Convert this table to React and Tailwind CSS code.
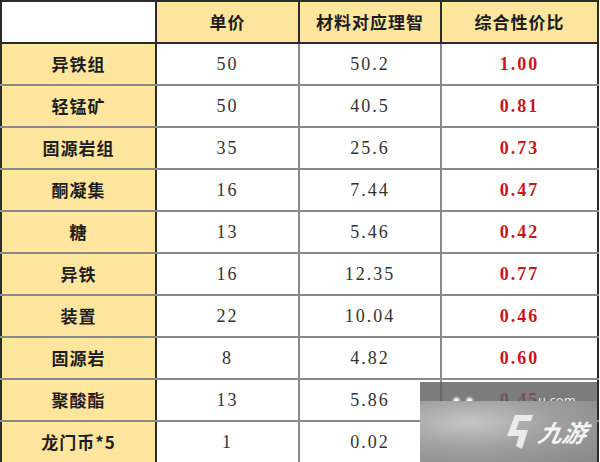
const ROWS = [
  ["异铁组", "50", "50.2", "1.00"],
  ["轻锰矿", "50", "40.5", "0.81"],
  ["固源岩组", "35", "25.6", "0.73"],
  ["酮凝集", "16", "7.44", "0.47"],
  ["糖", "13", "5.46", "0.42"],
  ["异铁", "16", "12.35", "0.77"],
  ["装置", "22", "10.04", "0.46"],
  ["固源岩", "8", "4.82", "0.60"],
  ["聚酸酯", "13", "5.86", "0.45"],
  ["龙门币*5", "1", "0.02", ""],
];

const cjk = "font-['Noto_Sans_CJK_SC',sans-serif]";
const num = "font-['Liberation_Serif','Noto_Sans_CJK_SC',serif] tracking-[2px]";

function Watermark() {
  return (
    <div className="absolute left-[420px] top-[382px] w-[177px] h-[80px] overflow-hidden">
      <div className="h-[19px] bg-[rgba(95,95,95,0.82)] flex items-end gap-2 pl-8 overflow-hidden">
        <span className="text-white text-[15px] leading-none translate-y-[6px] blur-[1px] font-bold">● ●</span>
        <span className="text-[#e9e9e9] text-[13px] leading-none translate-y-[6px] blur-[0.6px] ml-14">u.com</span>
      </div>
      <div className="h-[61px] bg-[radial-gradient(ellipse_at_28%_35%,#c6c6c6_0%,#a0a0a0_45%,#878787_100%)] flex items-center pl-[86px] gap-[5px]">
        <svg width="28" height="38" viewBox="0 0 28 38" className="opacity-90 shrink-0">
          <path d="M9 2 L27 2 L25 8 L13 8 L10 17 L22 17 L16 36 L10 33 L13 23 L1 23 Z" fill="#f2f2f2" />
        </svg>
        <span className={`${cjk} text-[#f4f4f4] text-[24px] font-bold italic leading-none -skew-x-12 whitespace-nowrap`}>
          九游
        </span>
      </div>
    </div>
  );
}

export default function App() {
  return (
    <div className="relative w-[600px] h-[462px] bg-white overflow-hidden">
      <table className="border-collapse table-fixed w-[597px]">
        <colgroup>
          <col className="w-[155px]" />
          <col className="w-[143px]" />
          <col className="w-[142px]" />
          <col className="w-[157px]" />
        </colgroup>
        <thead>
          <tr className="h-[42px]">
            <th className="bg-white border-2 border-[#2b2b2b]"></th>
            {["单价", "材料对应理智", "综合性价比"].map((h) => (
              <th
                key={h}
                className={`${cjk} bg-[#fde59d] border-2 border-[#2b2b2b] text-[17px] font-semibold text-[#1e1e1e] tracking-[1px]`}
              >
                {h}
              </th>
            ))}
          </tr>
        </thead>
        <tbody>
          {ROWS.map((r) => (
            <tr key={r[0]} className="h-[42px]">
              <td
                className={`${cjk} bg-[#fde59d] border-2 border-[#8a8a8a] border-l-[#2b2b2b] border-r-[#2b2b2b] text-center text-[17px] font-bold text-[#1e1e1e] tracking-[1px]`}
              >
                {r[0]}
              </td>
              <td className={`${num} border-2 border-[#8a8a8a] text-center text-[18px] text-[#333]`}>{r[1]}</td>
              <td className={`${num} border-2 border-[#8a8a8a] text-center text-[18px] text-[#333]`}>{r[2]}</td>
              <td className={`${num} border-2 border-[#8a8a8a] border-r-[#2b2b2b] text-center text-[18px] text-[#c8161e] font-semibold`}>
                {r[3]}
              </td>
            </tr>
          ))}
        </tbody>
      </table>
      <Watermark />
    </div>
  );
}
